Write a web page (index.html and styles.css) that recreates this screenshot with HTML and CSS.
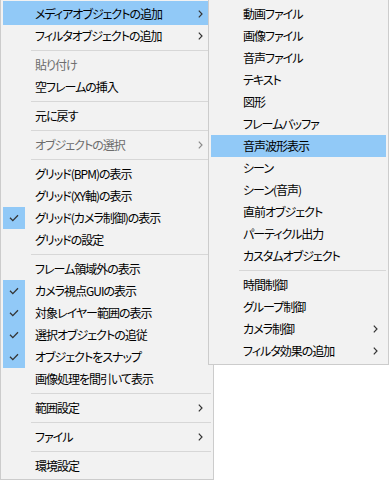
FILE: index.html
```html
<!DOCTYPE html>
<html lang="ja">
<head>
    <meta charset="UTF-8">
    <meta name="viewport" content="width=device-width, initial-scale=1.0">
    <title>メニュー</title>
    <link rel="stylesheet" href="styles.css">
</head>
<body>
    <div class="menu main-menu">
        <div class="item sub hover first"><span class="icon"></span><span class="label">メディアオブジェクトの追加</span><span class="arrow"><svg width="5" height="8" viewBox="0 0 5 8"><polyline points="0.8,0.6 4,4 0.8,7.4"/></svg></span></div>
        <div class="item sub"><span class="icon"></span><span class="label">フィルタオブジェクトの追加</span><span class="arrow"><svg width="5" height="8" viewBox="0 0 5 8"><polyline points="0.8,0.6 4,4 0.8,7.4"/></svg></span></div>
        <div class="sep"></div>
        <div class="item disabled"><span class="icon"></span><span class="label">貼り付け</span></div>
        <div class="item"><span class="icon"></span><span class="label">空フレームの挿入</span></div>
        <div class="sep"></div>
        <div class="item"><span class="icon"></span><span class="label">元に戻す</span></div>
        <div class="sep"></div>
        <div class="item sub disabled"><span class="icon"></span><span class="label">オブジェクトの選択</span><span class="arrow"><svg width="5" height="8" viewBox="0 0 5 8"><polyline points="0.8,0.6 4,4 0.8,7.4"/></svg></span></div>
        <div class="sep"></div>
        <div class="item"><span class="icon"></span><span class="label">グリッド(BPM)の表示</span></div>
        <div class="item"><span class="icon"></span><span class="label">グリッド(XY軸)の表示</span></div>
        <div class="item checked"><span class="icon"><svg width="10" height="8" viewBox="0 0 10 8"><polyline points="1,3.8 3.8,6.6 9,1.2"/></svg></span><span class="label">グリッド(カメラ制御)の表示</span></div>
        <div class="item"><span class="icon"></span><span class="label">グリッドの設定</span></div>
        <div class="sep"></div>
        <div class="item"><span class="icon"></span><span class="label">フレーム領域外の表示</span></div>
        <div class="item checked"><span class="icon"><svg width="10" height="8" viewBox="0 0 10 8"><polyline points="1,3.8 3.8,6.6 9,1.2"/></svg></span><span class="label">カメラ視点GUIの表示</span></div>
        <div class="item checked"><span class="icon"><svg width="10" height="8" viewBox="0 0 10 8"><polyline points="1,3.8 3.8,6.6 9,1.2"/></svg></span><span class="label">対象レイヤー範囲の表示</span></div>
        <div class="item checked"><span class="icon"><svg width="10" height="8" viewBox="0 0 10 8"><polyline points="1,3.8 3.8,6.6 9,1.2"/></svg></span><span class="label">選択オブジェクトの追従</span></div>
        <div class="item checked"><span class="icon"><svg width="10" height="8" viewBox="0 0 10 8"><polyline points="1,3.8 3.8,6.6 9,1.2"/></svg></span><span class="label">オブジェクトをスナップ</span></div>
        <div class="item"><span class="icon"></span><span class="label">画像処理を間引いて表示</span></div>
        <div class="sep"></div>
        <div class="item sub"><span class="icon"></span><span class="label">範囲設定</span><span class="arrow"><svg width="5" height="8" viewBox="0 0 5 8"><polyline points="0.8,0.6 4,4 0.8,7.4"/></svg></span></div>
        <div class="sep"></div>
        <div class="item sub"><span class="icon"></span><span class="label">ファイル</span><span class="arrow"><svg width="5" height="8" viewBox="0 0 5 8"><polyline points="0.8,0.6 4,4 0.8,7.4"/></svg></span></div>
        <div class="sep"></div>
        <div class="item"><span class="icon"></span><span class="label">環境設定</span></div>
    </div>

    <!-- submenu of メディアオブジェクトの追加 -->
    <div class="menu sub-menu">
        <div class="item"><span class="icon"></span><span class="label">動画ファイル</span></div>
        <div class="item"><span class="icon"></span><span class="label">画像ファイル</span></div>
        <div class="item"><span class="icon"></span><span class="label">音声ファイル</span></div>
        <div class="item"><span class="icon"></span><span class="label">テキスト</span></div>
        <div class="item"><span class="icon"></span><span class="label">図形</span></div>
        <div class="item"><span class="icon"></span><span class="label">フレームバッファ</span></div>
        <div class="item hover"><span class="icon"></span><span class="label">音声波形表示</span></div>
        <div class="item"><span class="icon"></span><span class="label">シーン</span></div>
        <div class="item"><span class="icon"></span><span class="label">シーン(音声)</span></div>
        <div class="item"><span class="icon"></span><span class="label">直前オブジェクト</span></div>
        <div class="item"><span class="icon"></span><span class="label">パーティクル出力</span></div>
        <div class="item"><span class="icon"></span><span class="label">カスタムオブジェクト</span></div>
        <div class="sep"></div>
        <div class="item"><span class="icon"></span><span class="label">時間制御</span></div>
        <div class="item"><span class="icon"></span><span class="label">グループ制御</span></div>
        <div class="item sub"><span class="icon"></span><span class="label">カメラ制御</span><span class="arrow"><svg width="5" height="8" viewBox="0 0 5 8"><polyline points="0.8,0.6 4,4 0.8,7.4"/></svg></span></div>
        <div class="item sub"><span class="icon"></span><span class="label">フィルタ効果の追加</span><span class="arrow"><svg width="5" height="8" viewBox="0 0 5 8"><polyline points="0.8,0.6 4,4 0.8,7.4"/></svg></span></div>
    </div>
</body>
</html>
```

FILE: styles.css
```css
body {
    margin: 0;
    padding: 0;
    background: #fff;
    font-family: "Noto Sans CJK JP", "Noto Sans", sans-serif;
    font-size: 12px;
    font-feature-settings: "palt" 1;
    color: #000;
    position: relative;
    height: 480px;
    overflow: hidden;
}

.menu {
    background: #f2f2f2;
    border: 1px solid #cccccc;
    padding: 3px 2px 2px 2px;
    box-sizing: border-box;
}

.main-menu {
    width: 214px;
    margin-top: -1px;
}

/* flyout sits over the main menu */
.sub-menu {
    position: absolute;
    top: -1px;
    left: 208px;
    width: 181px;
}

.item {
    display: flex;
    align-items: center;
    height: 22px;
    line-height: 22px;
    white-space: nowrap;
}

.main-menu .first {
    height: 24px;
    margin-top: -2px;
    padding-top: 2px;
    box-sizing: border-box;
}

.item.hover {
    background: #91c9f7;
}

.icon {
    width: 22px;
    height: 22px;
    margin-right: 10px;
    display: flex;
    align-items: center;
    justify-content: center;
    flex-shrink: 0;
}

.item.checked .icon {
    background: #91c9f7;
}

.icon svg polyline {
    fill: none;
    stroke: #333;
    stroke-width: 1.3;
}

.label {
    flex: 1;
    letter-spacing: -1px;
}

.arrow {
    width: 22px;
    display: flex;
    align-items: center;
    justify-content: center;
}

.arrow svg polyline {
    fill: none;
    stroke: #333;
    stroke-width: 1.2;
}

.item.disabled {
    color: #6d6d6d;
}

.item.disabled .arrow svg polyline {
    stroke: #8a8a8a;
}

.sep {
    height: 1px;
    background: #d7d7d7;
    margin: 3px 0 3px 28px;
}
```
